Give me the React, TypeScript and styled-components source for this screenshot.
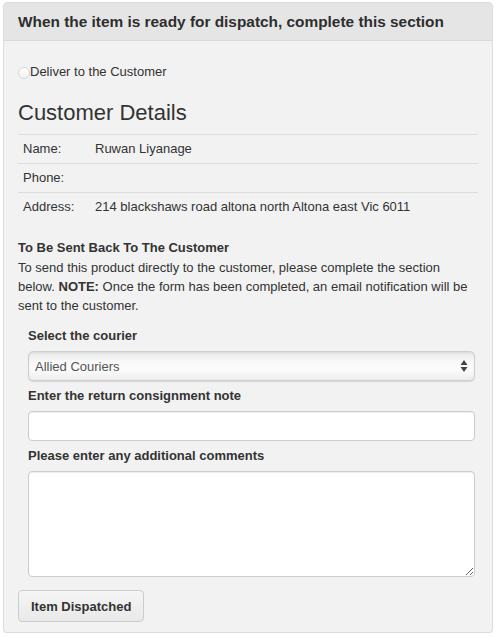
import React, { useState } from 'react';
import styled, { createGlobalStyle } from 'styled-components';

const GlobalStyle = createGlobalStyle`
  body {
    margin: 0;
    background: #ffffff;
    font-family: "Liberation Sans", Arial, sans-serif;
    color: #333333;
  }
`;

interface DetailRow {
  label: string;
  value: string;
}

const details: DetailRow[] = [
  { label: 'Name:', value: 'Ruwan Liyanage' },
  { label: 'Phone:', value: '' },
  { label: 'Address:', value: '214 blackshaws road altona north Altona east Vic 6011' },
];

const couriers = ['Allied Couriers', 'Australia Post', 'StarTrack', 'TNT'];

const DispatchPanel = () => {
  const [deliver, setDeliver] = useState<boolean>(false);
  const [courier, setCourier] = useState<string>(couriers[0]);
  const [note, setNote] = useState<string>('');
  const [comments, setComments] = useState<string>('');

  return (
    <>
      <GlobalStyle />
      <Panel>
        <Header>When the item is ready for dispatch, complete this section</Header>
        <Body>
          <RadioRow>
            <Radio type="radio" checked={deliver} onChange={() => setDeliver(true)} />
            Deliver to the Customer
          </RadioRow>

          <Title>Customer Details</Title>
          <Table>
            <tbody>
              {details.map((row) => (
                <tr key={row.label}>
                  <LabelCell>{row.label}</LabelCell>
                  <Cell>{row.value}</Cell>
                </tr>
              ))}
            </tbody>
          </Table>

          <SubHeading>To Be Sent Back To The Customer</SubHeading>
          <Paragraph>
            To send this product directly to the customer, please complete the section below.{' '}
            <b>NOTE:</b> Once the form has been completed, an email notification will be sent to
            the customer.
          </Paragraph>

          <Form>
            <FieldLabel>Select the courier</FieldLabel>
            <SelectWrap>
              <Select value={courier} onChange={(e) => setCourier(e.target.value)}>
                {couriers.map((c) => (
                  <option key={c}>{c}</option>
                ))}
              </Select>
              <Arrows width="8" height="14" viewBox="0 0 8 14">
                <path d="M4 1 L7.5 6 L0.5 6 Z" fill="#444" />
                <path d="M4 13 L7.5 8 L0.5 8 Z" fill="#444" />
              </Arrows>
            </SelectWrap>

            <FieldLabel>Enter the return consignment note</FieldLabel>
            <Input type="text" value={note} onChange={(e) => setNote(e.target.value)} />

            <FieldLabel>Please enter any additional comments</FieldLabel>
            <TextArea value={comments} onChange={(e) => setComments(e.target.value)} />
          </Form>

          <Button type="button">Item Dispatched</Button>
        </Body>
      </Panel>
    </>
  );
};

export default DispatchPanel;

const Panel = styled.div`
  box-sizing: border-box;
  width: 490px;
  margin: 2px 0 0 3px;
  border: 1px solid #dcdcdc;
  border-radius: 4px;
  background: #f2f2f2;
  box-shadow: 0 1px 1px rgba(0, 0, 0, 0.05);
  overflow: hidden;
`;

const Header = styled.div`
  height: 38px;
  box-sizing: border-box;
  padding: 9px 14px;
  background: #e5e5e5;
  border-bottom: 1px solid #dadada;
  font-size: 15.4px;
  line-height: 20px;
  font-weight: bold;
  color: #2e2e2e;
`;

const Body = styled.div`
  padding: 21px 14px 10px;
`;

const RadioRow = styled.label`
  display: flex;
  align-items: center;
  height: 20px;
  font-size: 13px;
  line-height: 20px;
`;

const Radio = styled.input`
  appearance: none;
  width: 12px;
  height: 12px;
  margin: 2px 0 0 0;
  border-radius: 50%;
  border: 1px solid #d8d8d8;
  background: linear-gradient(#ffffff, #f0f0f0);
  &:checked {
    background: radial-gradient(circle, #555 0 3px, #fff 3.5px);
  }
`;

const Title = styled.h3`
  margin: 18px 0 8px;
  font-size: 22px;
  line-height: 26px;
  font-weight: normal;
  color: #333;
`;

const Table = styled.table`
  width: 100%;
  border-collapse: collapse;
  font-size: 13px;
  line-height: 20px;
  tr {
    border-top: 1px solid #dddddd;
  }
`;

const Cell = styled.td`
  padding: 4px 5px;
  vertical-align: top;
`;

const LabelCell = styled(Cell)`
  width: 62px;
`;

const SubHeading = styled.div`
  margin-top: 17px;
  font-size: 13px;
  line-height: 20px;
  font-weight: bold;
`;

const Paragraph = styled.p`
  margin: 0;
  font-size: 13px;
  line-height: 19px;
`;

const Form = styled.div`
  display: flex;
  flex-direction: column;
  padding: 11px 3px 0 10px;
`;

const FieldLabel = styled.label`
  display: block;
  font-size: 13px;
  line-height: 20px;
  font-weight: bold;
  margin-bottom: 5px;
  & + * + & {
    margin-top: 5px;
  }
`;

const SelectWrap = styled.div`
  position: relative;
`;

const Select = styled.select`
  appearance: none;
  box-sizing: border-box;
  width: 100%;
  height: 30px;
  padding: 0 24px 0 6px;
  font-family: "Liberation Sans", Arial, sans-serif;
  font-size: 13px;
  color: #555;
  border: 1px solid #cfcfcf;
  border-radius: 5px;
  background: linear-gradient(#e9e9e9 0%, #f9f9f9 35%, #fbfbfb 65%, #ededed 100%);
  box-shadow: 0 1px 1px rgba(0, 0, 0, 0.12), inset 0 1px 2px rgba(0, 0, 0, 0.08);
  outline: none;
`;

const Arrows = styled.svg`
  position: absolute;
  right: 7px;
  top: 8px;
  pointer-events: none;
`;

const Input = styled.input`
  box-sizing: border-box;
  width: 100%;
  height: 30px;
  padding: 4px 6px;
  font-family: "Liberation Sans", Arial, sans-serif;
  font-size: 13px;
  border: 1px solid #cccccc;
  border-radius: 4px;
  background: #fff;
  box-shadow: inset 0 1px 1px rgba(0, 0, 0, 0.075);
  outline: none;
`;

const TextArea = styled.textarea`
  box-sizing: border-box;
  display: block;
  width: 100%;
  height: 106px;
  padding: 4px 6px;
  font-family: "Liberation Sans", Arial, sans-serif;
  font-size: 13px;
  border: 1px solid #cccccc;
  border-radius: 4px;
  background: #fff;
  box-shadow: inset 0 1px 1px rgba(0, 0, 0, 0.075);
  outline: none;
  resize: vertical;
`;

const Button = styled.button`
  display: block;
  margin-top: 13px;
  height: 32px;
  padding: 0 12px;
  font-family: "Liberation Sans", Arial, sans-serif;
  font-size: 13px;
  font-weight: bold;
  color: #333;
  border: 1px solid #cccccc;
  border-radius: 4px;
  background: linear-gradient(#f5f5f5, #e9e9e9);
  box-shadow: inset 0 1px 0 rgba(255, 255, 255, 0.3);
  cursor: pointer;
`;
